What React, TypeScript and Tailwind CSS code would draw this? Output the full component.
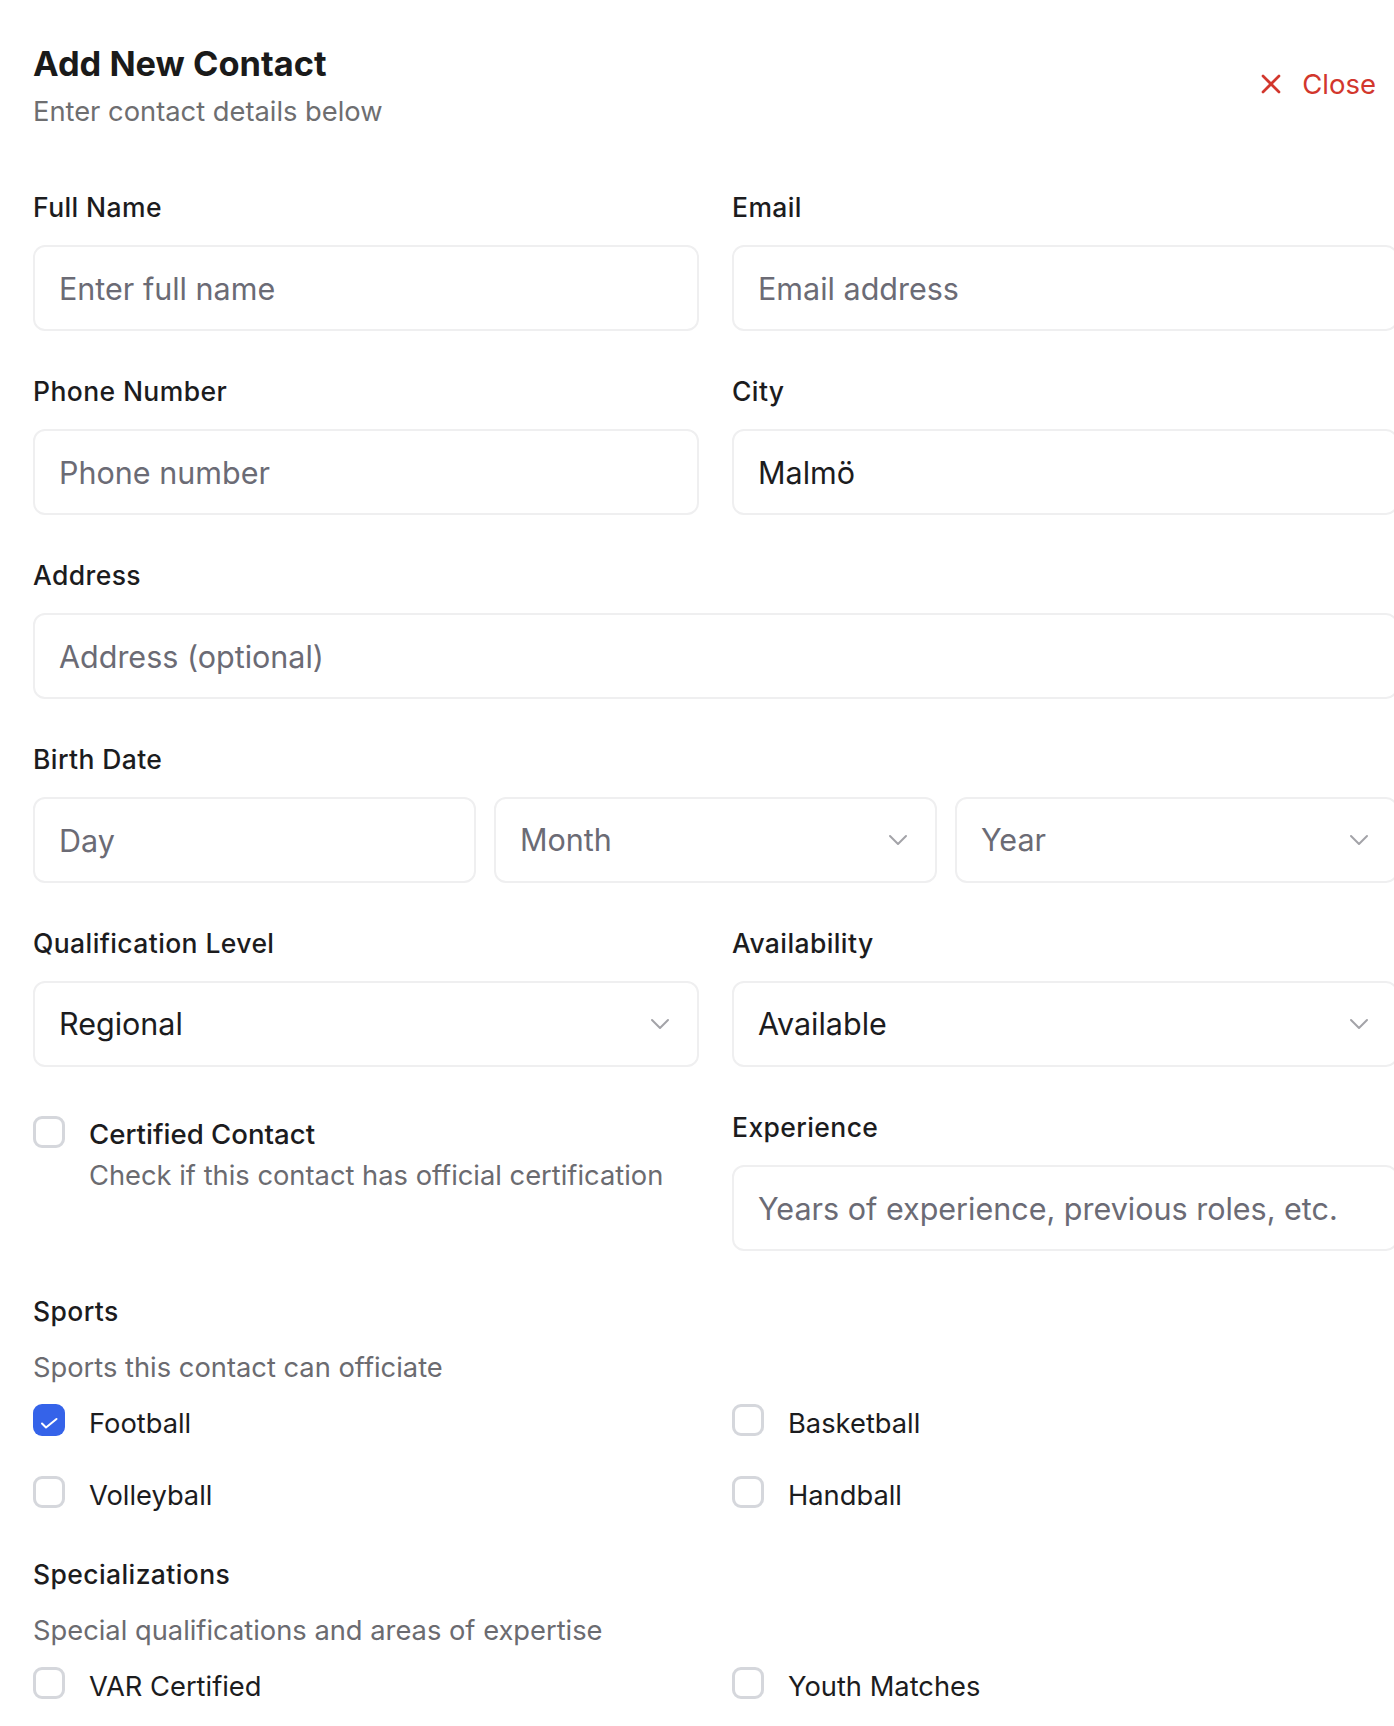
import { type ReactNode } from 'react';

const font = { fontFamily: 'Inter, "Noto Sans", sans-serif' };

function XIcon() {
  return (
    <svg width="32" height="32" viewBox="0 0 24 24" fill="none" stroke="currentColor" strokeWidth="2" strokeLinecap="round">
      <path d="M18 6 6 18" />
      <path d="m6 6 12 12" />
    </svg>
  );
}

function Chevron() {
  return (
    <svg width="32" height="32" viewBox="0 0 24 24" fill="none" stroke="#a3a3a8" strokeWidth="1.5" strokeLinecap="round" strokeLinejoin="round">
      <path d="m6 9 6 6 6-6" />
    </svg>
  );
}

const boxCls = 'flex h-[86px] w-full items-center rounded-xl border-2 border-[#efeff0] bg-white px-6 text-[30.5px]';

function Label({ children }: { children: ReactNode }) {
  return <div className="text-[26.5px] font-medium leading-[32px] tracking-[0.4px] text-[#1c1c1e]">{children}</div>;
}

function Field({ label, children, className = '' }: { label: string; children: ReactNode; className?: string }) {
  return (
    <div className={className}>
      <Label>{label}</Label>
      <div className="mt-[22px]">{children}</div>
    </div>
  );
}

function TextInput({ placeholder, value }: { placeholder: string; value?: string }) {
  return (
    <input
      readOnly
      defaultValue={value}
      placeholder={placeholder}
      className={`${boxCls} text-[#1c1c1e] outline-none placeholder:text-[#6b6b75]`}
      style={font}
    />
  );
}

function Select({ value, placeholder }: { value?: string; placeholder?: string }) {
  return (
    <div className={`${boxCls} justify-between pr-[21px]`}>
      <span className={value ? 'text-[#1c1c1e]' : 'text-[#6b6b75]'}>{value ?? placeholder}</span>
      <Chevron />
    </div>
  );
}

function Box({ checked }: { checked?: boolean }) {
  if (checked)
    return (
      <span className="flex h-8 w-8 shrink-0 rounded-[9px] bg-[#3563e9]">
        <svg width="32" height="32" viewBox="0 0 32 32" fill="none" stroke="white" strokeWidth="2" strokeLinecap="round" strokeLinejoin="round">
          <path d="M9 19.5 13 23.5 23.5 15" />
        </svg>
      </span>
    );
  return <span className="h-8 w-8 shrink-0 rounded-[9px] border-[3px] border-[#d5d7dc] bg-white" />;
}

function Check({ label, checked }: { label: string; checked?: boolean }) {
  return (
    <div className="flex items-start gap-6">
      <Box checked={checked} />
      <span className="mt-[2px] text-[27.3px] leading-[36px] text-[#1c1c1e]">{label}</span>
    </div>
  );
}

function Group({ title, hint, items }: { title: string; hint: string; items: { label: string; checked?: boolean }[] }) {
  return (
    <div className="col-span-2">
      <Label>{title}</Label>
      <div className="mt-[25px] text-[27.3px] leading-[32px] text-[#6b6b70]">{hint}</div>
      <div className="mt-[20px] grid grid-cols-[666px_666px] gap-x-[33px] gap-y-[34px]">
        {items.map((i) => (
          <Check key={i.label} label={i.label} checked={i.checked} />
        ))}
      </div>
    </div>
  );
}

export default function App() {
  return (
    <div className="min-h-[1726px] w-[1394px] overflow-hidden bg-white antialiased" style={font}>
      <div className="ml-[33px] w-[1365px] pt-[44px] pb-10">
        <div className="mb-[63px] flex items-start justify-between">
          <div>
            <h1 className="text-[34.4px] font-bold leading-[40px] text-[#1a1a1a]">Add New Contact</h1>
            <p className="mt-[12px] text-[27.3px] leading-[32px] text-[#6e6e70]">Enter contact details below</p>
          </div>
          <button className="mt-[22px] flex items-center gap-[15px] pr-[22px] text-[27.5px] leading-[36px] text-[#d2372d]">
            <XIcon />
            Close
          </button>
        </div>

        <div className="grid grid-cols-[666px_666px] gap-x-[33px] gap-y-[44px]">
          <Field label="Full Name">
            <TextInput placeholder="Enter full name" />
          </Field>
          <Field label="Email">
            <TextInput placeholder="Email address" />
          </Field>
          <Field label="Phone Number">
            <TextInput placeholder="Phone number" />
          </Field>
          <Field label="City">
            <TextInput placeholder="City" value="Malmö" />
          </Field>
          <Field label="Address" className="col-span-2">
            <TextInput placeholder="Address (optional)" />
          </Field>
          <Field label="Birth Date" className="col-span-2">
            <div className="grid grid-cols-3 gap-[18px]">
              <TextInput placeholder="Day" />
              <Select placeholder="Month" />
              <Select placeholder="Year" />
            </div>
          </Field>
          <Field label="Qualification Level">
            <Select value="Regional" />
          </Field>
          <Field label="Availability">
            <Select value="Available" />
          </Field>
          <div className="flex items-start gap-6 pt-[5px]">
            <Box />
            <div>
              <div className="text-[27.6px] font-medium leading-[36px] text-[#1c1c1e]">Certified Contact</div>
              <div className="mt-[6px] text-[27.3px] leading-[36px] text-[#6b6b70]">
                Check if this contact has official certification
              </div>
            </div>
          </div>
          <Field label="Experience">
            <TextInput placeholder="Years of experience, previous roles, etc." />
          </Field>

          <Group
            title="Sports"
            hint="Sports this contact can officiate"
            items={[
              { label: 'Football', checked: true },
              { label: 'Basketball' },
              { label: 'Volleyball' },
              { label: 'Handball' },
            ]}
          />
          <Group
            title="Specializations"
            hint="Special qualifications and areas of expertise"
            items={[{ label: 'VAR Certified' }, { label: 'Youth Matches' }]}
          />
        </div>
      </div>
    </div>
  );
}
